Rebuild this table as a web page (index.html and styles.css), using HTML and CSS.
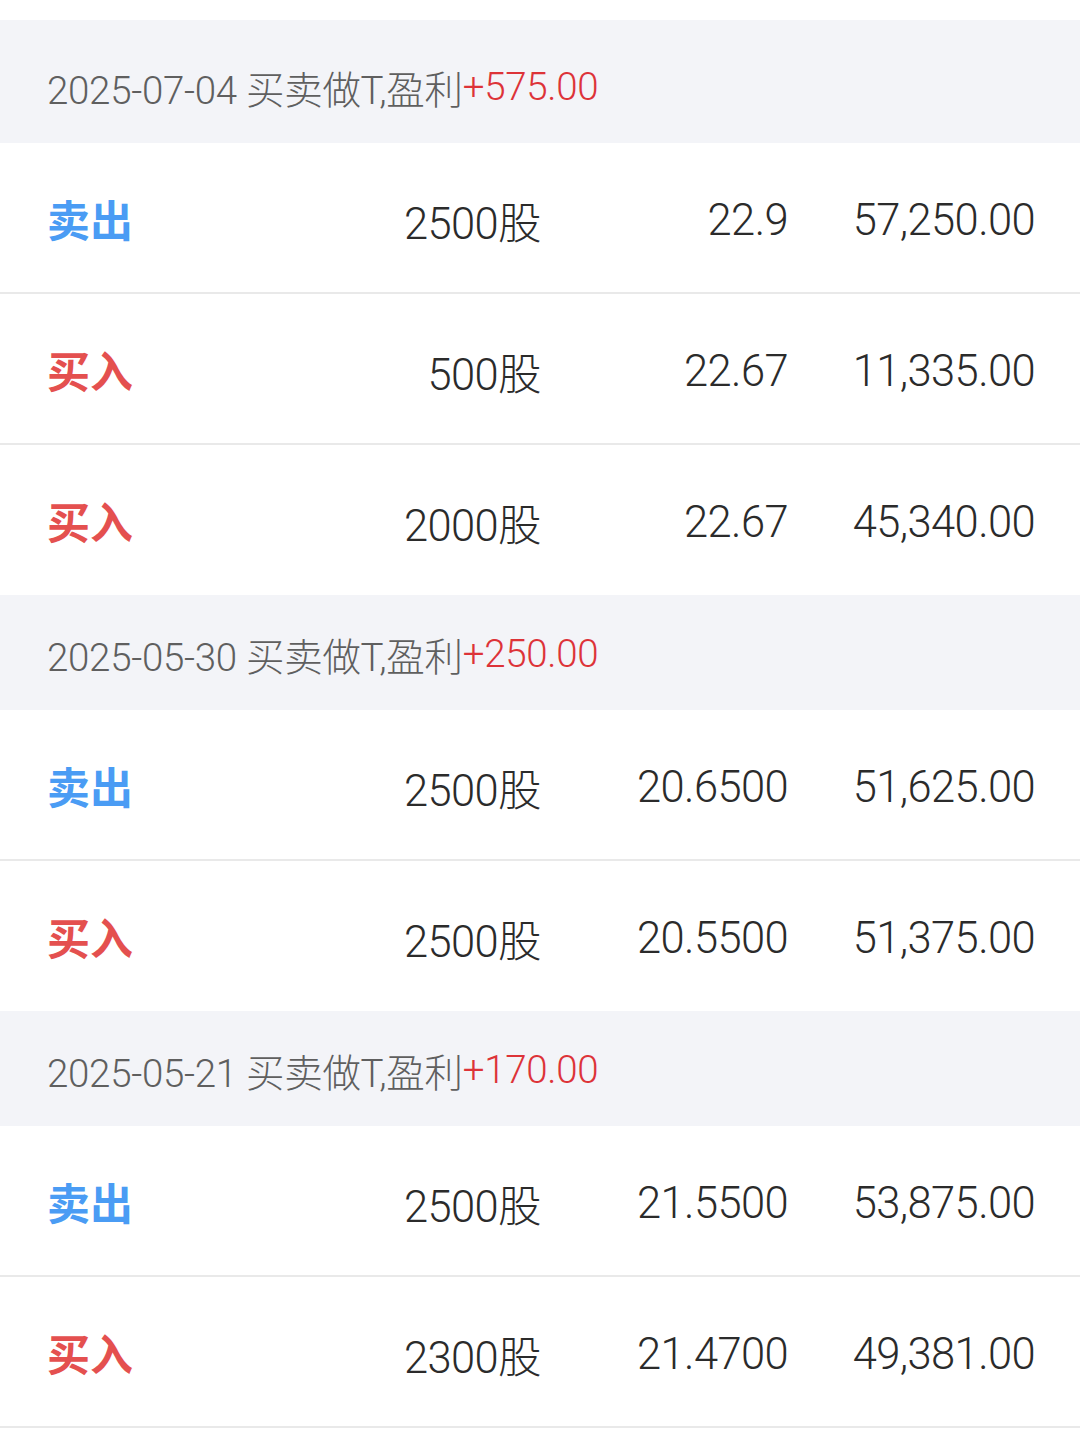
FILE: index.html
```html
<!DOCTYPE html>
<html lang="zh-CN">
<head>
<meta charset="utf-8">
<title>做T记录</title>
<link rel="stylesheet" href="styles.css">
</head>
<body>
<div class="page">
  <div class="group-head group-head--first">2025-07-04 买卖做T,盈利<span class="profit">+575.00</span></div>
  <div class="row"><span class="side sell">卖出</span><span class="num">2500股</span><span class="num">22.9</span><span class="num">57,250.00</span></div>
  <div class="row"><span class="side buy">买入</span><span class="num">500股</span><span class="num">22.67</span><span class="num">11,335.00</span></div>
  <div class="row row--last"><span class="side buy">买入</span><span class="num">2000股</span><span class="num">22.67</span><span class="num">45,340.00</span></div>

  <div class="group-head">2025-05-30 买卖做T,盈利<span class="profit">+250.00</span></div>
  <div class="row"><span class="side sell">卖出</span><span class="num">2500股</span><span class="num">20.6500</span><span class="num">51,625.00</span></div>
  <div class="row row--last"><span class="side buy">买入</span><span class="num">2500股</span><span class="num">20.5500</span><span class="num">51,375.00</span></div>

  <div class="group-head">2025-05-21 买卖做T,盈利<span class="profit">+170.00</span></div>
  <div class="row"><span class="side sell">卖出</span><span class="num">2500股</span><span class="num">21.5500</span><span class="num">53,875.00</span></div>
  <div class="row"><span class="side buy">买入</span><span class="num">2300股</span><span class="num">21.4700</span><span class="num">49,381.00</span></div>
</div>
</body>
</html>
```

FILE: styles.css
```css
* { box-sizing: border-box; }
html, body {
  margin: 0;
  padding: 0;
  background: #ffffff;
}
body {
  font-family: Roboto, "Noto Sans CJK SC", sans-serif;
  color: #333333;
}
.page {
  padding-top: 20px;
}
.group-head {
  height: 115px;
  background: #f3f4f8;
  display: flex;
  align-items: center;
  padding: 2px 47px 0;
  font-size: 38.5px;
  font-weight: 300;
  letter-spacing: -0.3px;
  color: #5f5f5f;
  white-space: nowrap;
}
.group-head--first {
  height: 123px;
  padding-top: 10px;
}
.profit {
  color: #dd3338;
}
.row {
  height: 151px;
  display: grid;
  grid-template-columns: 1fr 247px 247px 247px;
  align-items: center;
  padding: 0 46px 0 47px;
  border-bottom: 2px solid #e9e9e9;
  font-size: 43.5px;
  font-weight: 300;
}
.row--last {
  border-bottom: none;
  height: 150px;
}
.side {
  font-weight: 700;
  font-size: 43px;
  font-family: "Noto Sans CJK SC", sans-serif;
}
.sell { color: #4a9cf4; }
.buy { color: #e4504f; }
.num {
  text-align: right;
  color: #2b2b2b;
  letter-spacing: -0.6px;
  padding-top: 5px;
  margin-right: -1px;
}
```
